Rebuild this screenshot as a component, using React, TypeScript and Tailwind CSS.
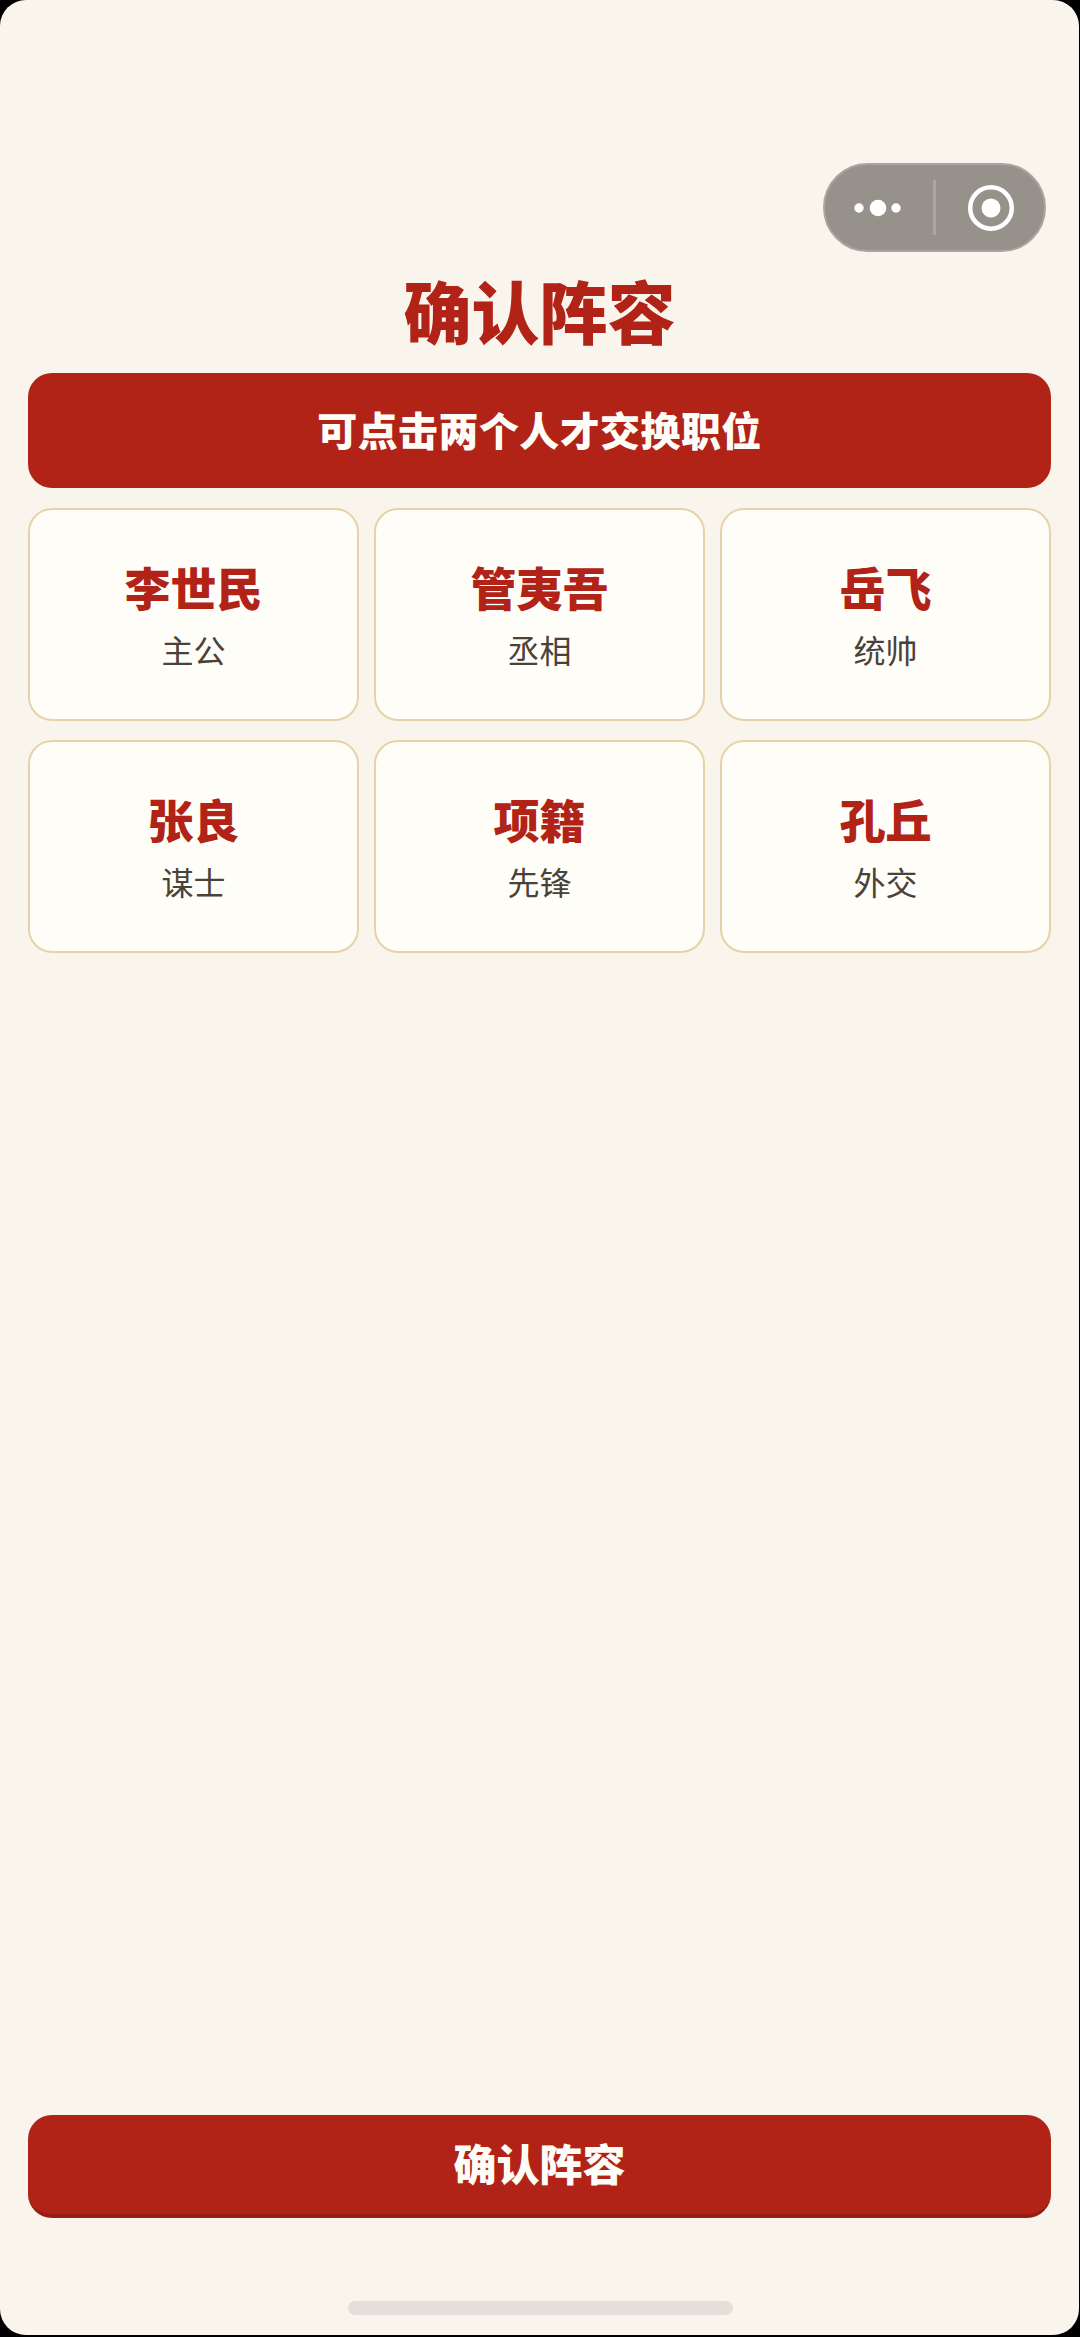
import React from 'react';

const CN = "font-['Noto_Sans_CJK_SC',sans-serif]";

const TEAM = [
  { name: '李世民', role: '主公' },
  { name: '管夷吾', role: '丞相' },
  { name: '岳飞', role: '统帅' },
  { name: '张良', role: '谋士' },
  { name: '项籍', role: '先锋' },
  { name: '孔丘', role: '外交' },
];

const Capsule: React.FC = () => (
  <div className="absolute left-[823px] top-[163px] flex h-[89px] w-[223px] items-center rounded-full border-2 border-[#a9a69f] bg-[#96928b]">
    <svg width="108" height="85" viewBox="0 0 108 85" className="shrink-0">
      <circle cx="34" cy="43" r="4.7" fill="#fff" />
      <circle cx="53" cy="43" r="8.3" fill="#fff" />
      <circle cx="71" cy="43" r="4.7" fill="#fff" />
    </svg>
    <div className="h-[55px] w-[3px] shrink-0 bg-[#aaa7a0]" />
    <svg width="108" height="85" viewBox="0 0 108 85" className="shrink-0">
      <circle cx="55" cy="43" r="20.8" fill="none" stroke="#fff" strokeWidth="4.5" />
      <circle cx="55" cy="43" r="9.5" fill="#fff" />
    </svg>
  </div>
);

const App: React.FC = () => {
  return (
    <div className={`relative h-[2337px] w-[1080px] overflow-hidden bg-black ${CN}`}>
      <div className="relative flex h-[2335px] w-[1079px] flex-col rounded-[26px] bg-[#f9f5ed] px-[28px] pt-[265px]">
        <Capsule />

        <h1 className="text-center text-[68px] leading-[90px] font-black text-[#b22317]">确认阵容</h1>

        <div className="mt-[18px] flex h-[115px] items-center justify-center rounded-[24px] bg-[#b22317] pb-[4px] text-[40px] font-black tracking-[0.4px] text-[#fffdf8]">
          可点击两个人才交换职位
        </div>

        <div className="mt-[20px] grid grid-cols-3 gap-x-[15px] gap-y-[19px]">
          {TEAM.map((m) => (
            <div
              key={m.name}
              className="flex h-[213px] flex-col items-center justify-center rounded-[24px] border-2 border-[#e6d2a9] bg-[#fffdf8] pb-[3px]"
            >
              <div className="text-[46px] leading-[60px] font-black text-[#b22317]">{m.name}</div>
              <div className="mt-[11px] text-[32px] leading-[44px] text-[#4a4238]">{m.role}</div>
            </div>
          ))}
        </div>

        <button className="mt-auto mb-[117px] h-[103px] rounded-[24px] border-b-4 border-[#971c12] bg-[#b22317] pb-[4px] text-[43px] font-black text-[#fffdf8]">
          确认阵容
        </button>

        <div className="absolute bottom-[20px] left-[348px] h-[14px] w-[385px] rounded-full bg-[#e4dfd8]" />
      </div>
    </div>
  );
};

export default App;
